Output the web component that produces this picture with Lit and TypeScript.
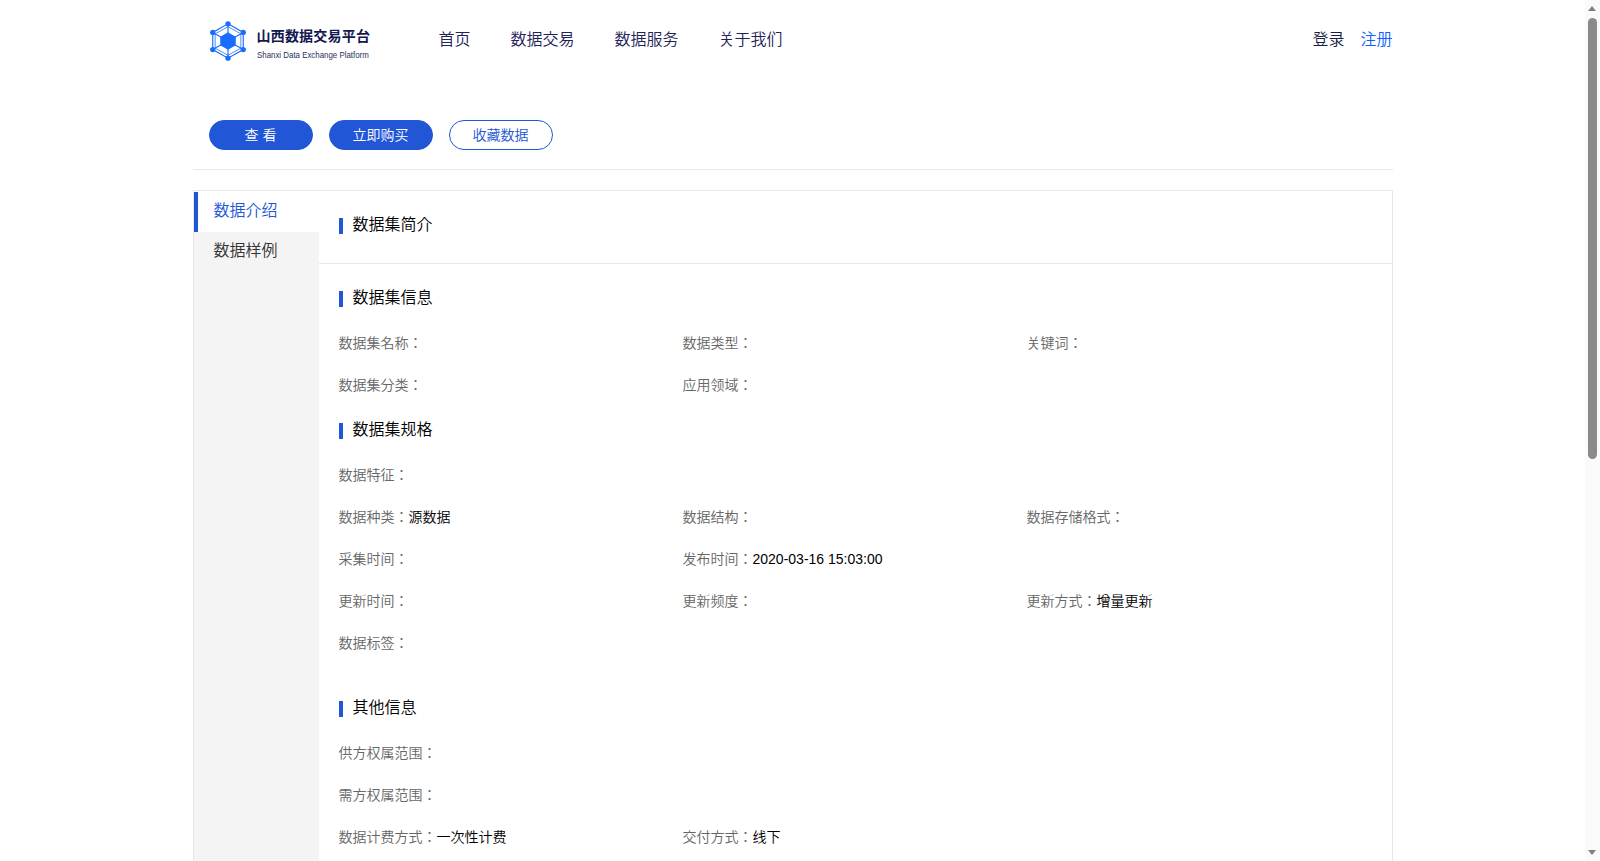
import { LitElement, css, html } from "lit";
import { customElement } from "lit/decorators.js";

type Field = { label: string; value?: string; span?: boolean };

const infoFields: Field[] = [
    { label: "数据集名称：" },
    { label: "数据类型：" },
    { label: "关键词：" },
    { label: "数据集分类：" },
    { label: "应用领域：" },
];

const specFields: Field[] = [
    { label: "数据特征：", span: true },
    { label: "数据种类：", value: "源数据" },
    { label: "数据结构：" },
    { label: "数据存储格式：" },
    { label: "采集时间：" },
    { label: "发布时间：", value: "2020-03-16 15:03:00" },
    { label: "" },
    { label: "更新时间：" },
    { label: "更新频度：" },
    { label: "更新方式：", value: "增量更新" },
    { label: "数据标签：", span: true },
];

const otherFields: Field[] = [
    { label: "供方权属范围：", span: true },
    { label: "需方权属范围：", span: true },
    { label: "数据计费方式：", value: "一次性计费" },
    { label: "交付方式：", value: "线下" },
];

@customElement("app-root")
class AppRoot extends LitElement {
    static styles = css`
        :host {
            display: block;
            position: relative;
            box-sizing: border-box;
            height: 861px;
            overflow: hidden;
            padding-right: 15px;
            background: #fff;
            font-family: "Liberation Sans", "Noto Sans CJK JP", sans-serif;
            font-weight: 350;
        }

        .wrap {
            width: 1200px;
            margin: 0 auto;
        }

        .header {
            display: flex;
            align-items: center;
            height: 80px;
            padding: 0 0 0 16px;
        }

        .logo {
            display: flex;
            align-items: center;
            width: 230px;
            gap: 10px;
        }

        .logo svg {
            flex: none;
            display: block;
            margin-top: 2px;
        }

        .logo-text {
            padding-top: 8px;
        }

        .logo-name {
            font-size: 14px;
            line-height: 18px;
            font-weight: 700;
            letter-spacing: 0.2px;
            color: #12184f;
            white-space: nowrap;
        }

        .logo-en {
            font-size: 9.5px;
            line-height: 12px;
            margin-top: 4px;
            color: #2a2f5e;
            white-space: nowrap;
            transform: scaleX(0.83);
            transform-origin: left center;
        }

        .nav {
            display: flex;
            flex: 1;
            gap: 40px;
            font-size: 16px;
            line-height: 22px;
            color: #1f2458;
        }

        .auth {
            display: flex;
            gap: 16px;
            font-size: 16px;
            line-height: 22px;
            color: #1a1d45;
        }

        .auth .reg {
            color: #0f62ff;
        }

        .actions {
            display: flex;
            gap: 16px;
            padding: 40px 16px 19px;
            border-bottom: 1px solid #e8e8e8;
        }

        .btn {
            box-sizing: border-box;
            width: 104px;
            height: 30px;
            line-height: 28px;
            text-align: center;
            font-size: 14px;
            border: 1px solid #2156d6;
            border-radius: 15px;
            background: #2156d6;
            color: #fff;
        }

        .btn.ghost {
            background: #fff;
            color: #2156d6;
        }

        .box {
            display: flex;
            margin-top: 20px;
            border: 1px solid #e8e8e8;
            min-height: 1400px;
        }

        .side {
            flex: none;
            width: 125px;
            margin-top: 1px;
            background: #f4f4f4;
            font-size: 16px;
            color: #333;
        }

        .side div {
            height: 40px;
            line-height: 38px;
            padding-left: 20px;
        }

        .side .on {
            background: #fff;
            color: #2156d6;
            border-left: 4px solid #2156d6;
            padding-left: 16px;
        }

        .main {
            flex: 1;
            min-width: 0;
        }

        .intro {
            padding: 27px 20px 29px;
            border-bottom: 1px solid #e8e8e8;
        }

        .title {
            height: 16px;
            line-height: 14px;
            padding-left: 10px;
            border-left: 4px solid #2156d6;
            font-size: 16px;
            color: #000;
        }

        .section {
            padding: 0 20px;
        }

        .section.first {
            padding-top: 27px;
        }

        .section.mid {
            padding-top: 17px;
        }

        .section.last {
            padding-top: 37px;
        }

        .grid {
            display: grid;
            grid-template-columns: repeat(3, 344px);
            margin-top: 15px;
        }

        .field {
            height: 42px;
            line-height: 42px;
            font-size: 14px;
            color: #666;
            white-space: nowrap;
        }

        .field.span {
            grid-column: 1 / -1;
        }

        .field b {
            font-weight: 350;
            color: #000;
        }

        .scrollbar {
            position: absolute;
            top: 0;
            right: 0;
            bottom: 0;
            width: 15px;
            background: #fafafa;
        }

        .arrow {
            position: absolute;
            left: 3px;
            width: 0;
            height: 0;
            border-left: 4.5px solid transparent;
            border-right: 4.5px solid transparent;
        }

        .arrow.up {
            top: 6px;
            border-bottom: 5px solid #808080;
        }

        .arrow.down {
            bottom: 6px;
            border-top: 5px solid #808080;
        }

        .thumb {
            position: absolute;
            top: 18px;
            left: 3px;
            width: 9px;
            height: 441px;
            border-radius: 5px;
            background: #8a8a8a;
        }
    `;

    private renderFields(fields: Field[]) {
        return html`
            <div class="grid">
                ${fields.map(
                    (f) => html`<div class="field ${f.span ? "span" : ""}">${f.label}<b>${f.value ?? ""}</b></div>`,
                )}
            </div>
        `;
    }

    protected render() {
        return html`
            <div class="wrap">
                <div class="header">
                    <div class="logo">
                        <svg width="38" height="40" viewBox="0 0 38 42" fill="none" stroke="#1a6cff" stroke-width="1.2">
                            <path d="M19 3 35 12V30L19 39 3 30V12Z" />
                            <path d="M19 6 32.5 13.5V28.500L19 36 5.500 28.500V13.500Z" stroke-width="0.8" />
                            <path d="M19 3V39M3 12 35 30M35 12 3 30" />
                            <path d="M19 12.500 26.500 16.800V25.200L19 29.500 11.500 25.200V16.800Z" fill="#1a6cff" />
                            <g fill="#1a6cff" stroke="none">
                                <circle cx="19" cy="3" r="2.800" />
                                <circle cx="35" cy="12" r="2.800" />
                                <circle cx="35" cy="30" r="2.800" />
                                <circle cx="19" cy="39" r="2.800" />
                                <circle cx="3" cy="30" r="2.800" />
                                <circle cx="3" cy="12" r="2.800" />
                            </g>
                        </svg>
                        <div class="logo-text">
                            <div class="logo-name">山西数据交易平台</div>
                            <div class="logo-en">Shanxi Data Exchange Platform</div>
                        </div>
                    </div>
                    <div class="nav">
                        <span>首页</span>
                        <span>数据交易</span>
                        <span>数据服务</span>
                        <span>关于我们</span>
                    </div>
                    <div class="auth">
                        <span>登录</span>
                        <span class="reg">注册</span>
                    </div>
                </div>

                <div class="actions">
                    <div class="btn">查 看</div>
                    <div class="btn">立即购买</div>
                    <div class="btn ghost">收藏数据</div>
                </div>

                <div class="box">
                    <div class="side">
                        <div class="on">数据介绍</div>
                        <div>数据样例</div>
                    </div>
                    <div class="main">
                        <div class="intro">
                            <div class="title">数据集简介</div>
                        </div>
                        <div class="section first">
                            <div class="title">数据集信息</div>
                            ${this.renderFields(infoFields)}
                        </div>
                        <div class="section mid">
                            <div class="title">数据集规格</div>
                            ${this.renderFields(specFields)}
                        </div>
                        <div class="section last">
                            <div class="title">其他信息</div>
                            ${this.renderFields(otherFields)}
                        </div>
                    </div>
                </div>
            </div>
            <div class="scrollbar">
                <div class="arrow up"></div>
                <div class="thumb"></div>
                <div class="arrow down"></div>
            </div>
        `;
    }
}

declare global {
    interface HTMLElementTagNameMap {
        "app-root": AppRoot;
    }
}
